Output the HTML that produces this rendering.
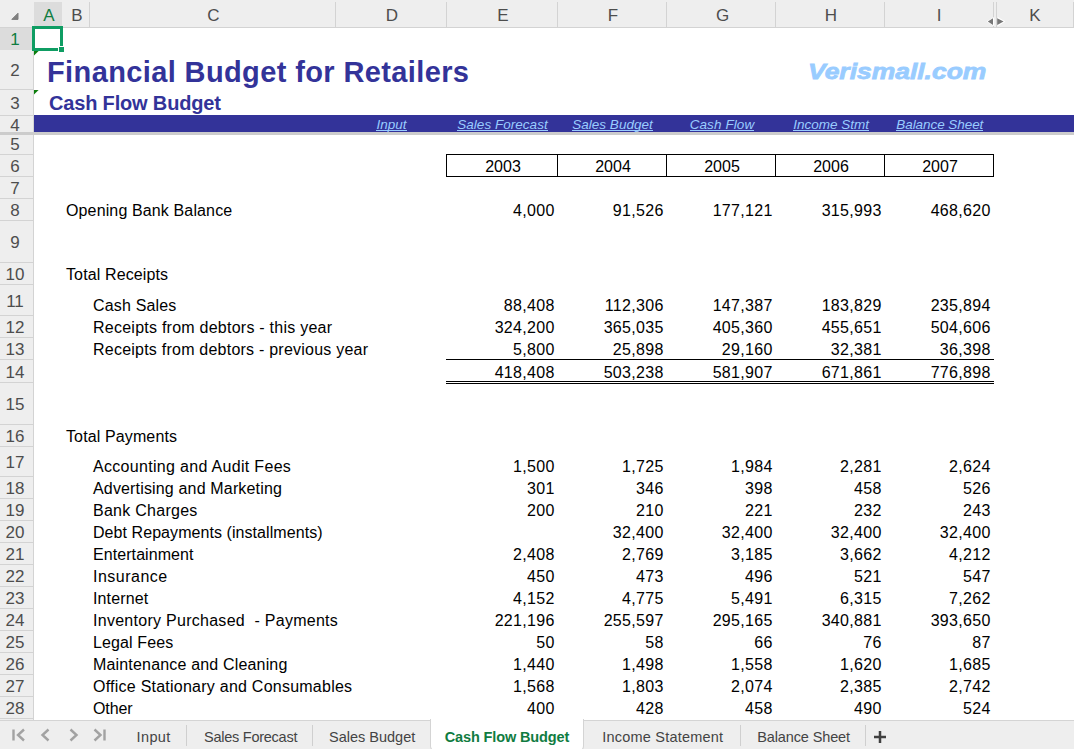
<!DOCTYPE html>
<html lang="en"><head><meta charset="utf-8"><title>Financial Budget for Retailers - Cash Flow Budget</title>
<style>
html,body{margin:0;padding:0;}
body{width:1074px;height:749px;overflow:hidden;background:#fff;position:relative;font-family:"Liberation Sans", sans-serif;color:#000;}
div,span{box-sizing:border-box;}
.a{position:absolute;white-space:pre;}
.ch{position:absolute;top:2px;height:27px;line-height:27px;text-align:center;font-size:17px;color:#4d4d4d;}
.rh{position:absolute;left:0;width:30px;text-align:center;font-size:17px;color:#4d4d4d;}
.vl{position:absolute;top:2px;height:25px;width:1px;background:#d3d3d3;}
.hl{position:absolute;left:0;width:33px;height:1px;background:#d3d3d3;}
.t{position:absolute;white-space:pre;font-size:16px;height:22px;line-height:22px;letter-spacing:0.2px;}
.n{position:absolute;white-space:pre;font-size:16px;height:22px;line-height:22px;text-align:right;letter-spacing:0.3px;}
.y{position:absolute;white-space:pre;font-size:16px;height:22px;line-height:22px;text-align:center;}
.lk{position:absolute;white-space:pre;font-size:13.5px;font-style:italic;color:#99ccff;text-align:center;height:17px;line-height:15px;top:117px;letter-spacing:0.03px;}
.lk span{display:inline-block;height:14px;line-height:15px;border-bottom:1px solid #99ccff;}
.bl{position:absolute;background:#000;}
.tab{position:absolute;top:723px;height:28px;line-height:28px;font-size:14.5px;color:#444;white-space:pre;}
.ts{position:absolute;top:725px;height:21px;width:1px;background:#cfcfcf;}

</style></head><body>
<div class="a" style="left:0;top:0;width:1074px;height:27px;background:#eeeeee"></div>
<div class="a" style="left:0;top:27px;width:1074px;height:1px;background:#d3d3d3"></div>
<div class="a" style="left:0;top:28px;width:33px;height:692px;background:#eeeeee"></div>
<div class="a" style="left:33px;top:28px;width:1px;height:692px;background:#d3d3d3"></div>
<div class="a" style="left:34px;top:2px;width:28px;height:25px;background:#dcdcdc"></div>
<div class="a" style="left:0;top:28px;width:33px;height:22px;background:#dcdcdc"></div>
<div class="vl" style="left:89px"></div>
<div class="vl" style="left:335px"></div>
<div class="vl" style="left:446px"></div>
<div class="vl" style="left:557px"></div>
<div class="vl" style="left:666px"></div>
<div class="vl" style="left:775px"></div>
<div class="vl" style="left:884px"></div>
<div class="vl" style="left:993px"></div>
<div class="vl" style="left:996px"></div>
<div class="vl" style="left:1073px"></div>
<div class="ch" style="left:35px;width:28px;color:#107c41;">A</div>
<div class="ch" style="left:64px;width:26px;">B</div>
<div class="ch" style="left:91px;width:245px;">C</div>
<div class="ch" style="left:337px;width:110px;">D</div>
<div class="ch" style="left:448px;width:110px;">E</div>
<div class="ch" style="left:559px;width:108px;">F</div>
<div class="ch" style="left:668.5px;width:108px;">G</div>
<div class="ch" style="left:777px;width:108px;">H</div>
<div class="ch" style="left:885px;width:108px;">I</div>
<div class="ch" style="left:997px;width:76px;">K</div>
<svg class="a" style="left:10px;top:10.6px" width="10" height="10" viewBox="0 0 10 10"><path d="M8 2.2 L8 8.4 L1.8 8.4 Z" fill="#7f7f7f" stroke="#7f7f7f" stroke-width="1" stroke-linejoin="round"/></svg>
<svg class="a" style="left:986px;top:16px" width="20" height="11" viewBox="0 0 20 11"><path d="M0.6 5.6 L8.2 1 L8.2 10.2 Z M19.4 5.6 L11.8 1 L11.8 10.2 Z" fill="#fff"/><path d="M1.8 5.6 L7 2.2 L7 9 Z M17.6 5.6 L11.2 2.2 L11.2 9 Z" fill="#777"/></svg>
<div class="rh" style="top:29px;height:21px;line-height:21px;color:#107c41;">1</div>
<div class="hl" style="top:89px"></div>
<div class="rh" style="top:51px;height:39px;line-height:39px;">2</div>
<div class="hl" style="top:115px"></div>
<div class="rh" style="top:91px;height:25px;line-height:25px;">3</div>
<div class="rh" style="top:118px;height:16px;line-height:16px;">4</div>
<div class="hl" style="top:154px"></div>
<div class="rh" style="top:134px;height:21px;line-height:21px;">5</div>
<div class="hl" style="top:176px"></div>
<div class="rh" style="top:156px;height:21px;line-height:21px;">6</div>
<div class="hl" style="top:198px"></div>
<div class="rh" style="top:178px;height:21px;line-height:21px;">7</div>
<div class="hl" style="top:220px"></div>
<div class="rh" style="top:200px;height:21px;line-height:21px;">8</div>
<div class="hl" style="top:262px"></div>
<div class="rh" style="top:222px;height:41px;line-height:41px;">9</div>
<div class="hl" style="top:284px"></div>
<div class="rh" style="top:264px;height:21px;line-height:21px;">10</div>
<div class="hl" style="top:315px"></div>
<div class="rh" style="top:287px;height:30px;line-height:30px;">11</div>
<div class="hl" style="top:337px"></div>
<div class="rh" style="top:317px;height:21px;line-height:21px;">12</div>
<div class="hl" style="top:359px"></div>
<div class="rh" style="top:339px;height:21px;line-height:21px;">13</div>
<div class="hl" style="top:382px"></div>
<div class="rh" style="top:362px;height:22px;line-height:22px;">14</div>
<div class="hl" style="top:424px"></div>
<div class="rh" style="top:384px;height:41px;line-height:41px;">15</div>
<div class="hl" style="top:446px"></div>
<div class="rh" style="top:426px;height:21px;line-height:21px;">16</div>
<div class="hl" style="top:476px"></div>
<div class="rh" style="top:448px;height:29px;line-height:29px;">17</div>
<div class="hl" style="top:498px"></div>
<div class="rh" style="top:478px;height:21px;line-height:21px;">18</div>
<div class="hl" style="top:520px"></div>
<div class="rh" style="top:500px;height:21px;line-height:21px;">19</div>
<div class="hl" style="top:542px"></div>
<div class="rh" style="top:522px;height:21px;line-height:21px;">20</div>
<div class="hl" style="top:564px"></div>
<div class="rh" style="top:544px;height:21px;line-height:21px;">21</div>
<div class="hl" style="top:586px"></div>
<div class="rh" style="top:566px;height:21px;line-height:21px;">22</div>
<div class="hl" style="top:608px"></div>
<div class="rh" style="top:588px;height:21px;line-height:21px;">23</div>
<div class="hl" style="top:630px"></div>
<div class="rh" style="top:610px;height:21px;line-height:21px;">24</div>
<div class="hl" style="top:652px"></div>
<div class="rh" style="top:632px;height:21px;line-height:21px;">25</div>
<div class="hl" style="top:674px"></div>
<div class="rh" style="top:654px;height:21px;line-height:21px;">26</div>
<div class="hl" style="top:696px"></div>
<div class="rh" style="top:676px;height:21px;line-height:21px;">27</div>
<div class="hl" style="top:718px"></div>
<div class="rh" style="top:698px;height:21px;line-height:21px;">28</div>
<div class="a" style="left:0;top:132px;width:1074px;height:3px;background:#cccccc"></div>
<div class="a" style="left:34px;top:115px;width:1040px;height:17px;background:#333399"></div>
<div class="lk" style="letter-spacing:0.03px;left:336px;width:111px"><span>Input</span></div>
<div class="lk" style="letter-spacing:0.03px;left:447px;width:111px"><span>Sales Forecast</span></div>
<div class="lk" style="letter-spacing:0.03px;left:558px;width:109px"><span>Sales Budget</span></div>
<div class="lk" style="letter-spacing:0.1px;left:667.5px;width:109px"><span>Cash Flow</span></div>
<div class="lk" style="letter-spacing:0px;left:776.6px;width:109px"><span>Income Stmt</span></div>
<div class="lk" style="letter-spacing:-0.06px;left:885.3px;width:109px"><span>Balance Sheet</span></div>
<div class="a" id="title" style="left:47px;top:55px;height:34px;line-height:34px;font-size:29px;font-weight:bold;color:#333399;letter-spacing:0.38px">Financial Budget for Retailers</div>
<div class="a" id="sub" style="left:49px;top:91px;height:24px;line-height:24px;font-size:20px;font-weight:bold;color:#333399;letter-spacing:-0.17px">Cash Flow Budget</div>
<div class="a" id="wa" style="left:808px;top:57px;height:30px;line-height:30px;font-size:22.6px;font-weight:bold;font-style:italic;color:#99ccff;-webkit-text-stroke:0.8px #99ccff;transform-origin:0 50%;transform:scaleX(1.17)">Verismall.com</div>
<div class="a" style="left:32px;top:26px;width:31px;height:25px;border:3px solid #0f9d63;background:#fff"></div>
<div class="a" style="left:58px;top:46px;width:7px;height:7px;background:#fff"></div>
<div class="a" style="left:59px;top:47px;width:5px;height:5px;background:#0f9d63"></div>
<svg class="a" style="left:34px;top:51px" width="5" height="5" viewBox="0 0 5 5"><path d="M0 0 L4.6 0 L0 4.6 Z" fill="#0b7d0b"/></svg>
<svg class="a" style="left:34px;top:90px" width="5" height="5" viewBox="0 0 5 5"><path d="M0 0 L4.6 0 L0 4.6 Z" fill="#0b7d0b"/></svg>
<div class="bl" style="left:446px;top:154px;width:548px;height:1px"></div>
<div class="bl" style="left:446px;top:176px;width:548px;height:1px"></div>
<div class="bl" style="left:446px;top:154px;width:1px;height:23px"></div>
<div class="bl" style="left:557px;top:154px;width:1px;height:23px"></div>
<div class="bl" style="left:666px;top:154px;width:1px;height:23px"></div>
<div class="bl" style="left:775px;top:154px;width:1px;height:23px"></div>
<div class="bl" style="left:884px;top:154px;width:1px;height:23px"></div>
<div class="bl" style="left:993px;top:154px;width:1px;height:23px"></div>
<div class="y" style="left:448px;width:110px;top:156px">2003</div>
<div class="y" style="left:559px;width:108px;top:156px">2004</div>
<div class="y" style="left:668px;width:108px;top:156px">2005</div>
<div class="y" style="left:777px;width:108px;top:156px">2006</div>
<div class="y" style="left:886px;width:108px;top:156px">2007</div>
<div class="t" style="left:66px;top:200px;letter-spacing:0.132px">Opening Bank Balance</div>
<div class="n" style="left:447px;width:107.6px;top:200px">4,000</div>
<div class="n" style="left:558px;width:105.6px;top:200px">91,526</div>
<div class="n" style="left:667px;width:105.6px;top:200px">177,121</div>
<div class="n" style="left:776px;width:105.6px;top:200px">315,993</div>
<div class="n" style="left:885px;width:105.6px;top:200px">468,620</div>
<div class="t" style="left:66px;top:264px;letter-spacing:0.123px">Total Receipts</div>
<div class="t" style="left:93px;top:295px;letter-spacing:0.167px">Cash Sales</div>
<div class="n" style="left:447px;width:107.6px;top:295px">88,408</div>
<div class="n" style="left:558px;width:105.6px;top:295px">112,306</div>
<div class="n" style="left:667px;width:105.6px;top:295px">147,387</div>
<div class="n" style="left:776px;width:105.6px;top:295px">183,829</div>
<div class="n" style="left:885px;width:105.6px;top:295px">235,894</div>
<div class="t" style="left:93px;top:317px;letter-spacing:0.244px">Receipts from debtors - this year</div>
<div class="n" style="left:447px;width:107.6px;top:317px">324,200</div>
<div class="n" style="left:558px;width:105.6px;top:317px">365,035</div>
<div class="n" style="left:667px;width:105.6px;top:317px">405,360</div>
<div class="n" style="left:776px;width:105.6px;top:317px">455,651</div>
<div class="n" style="left:885px;width:105.6px;top:317px">504,606</div>
<div class="t" style="left:93px;top:339px;letter-spacing:0.23px">Receipts from debtors - previous year</div>
<div class="n" style="left:447px;width:107.6px;top:339px">5,800</div>
<div class="n" style="left:558px;width:105.6px;top:339px">25,898</div>
<div class="n" style="left:667px;width:105.6px;top:339px">29,160</div>
<div class="n" style="left:776px;width:105.6px;top:339px">32,381</div>
<div class="n" style="left:885px;width:105.6px;top:339px">36,398</div>
<div class="n" style="left:447px;width:107.6px;top:362px">418,408</div>
<div class="n" style="left:558px;width:105.6px;top:362px">503,238</div>
<div class="n" style="left:667px;width:105.6px;top:362px">581,907</div>
<div class="n" style="left:776px;width:105.6px;top:362px">671,861</div>
<div class="n" style="left:885px;width:105.6px;top:362px">776,898</div>
<div class="t" style="left:66px;top:426px;letter-spacing:0.123px">Total Payments</div>
<div class="t" style="left:93px;top:456px;letter-spacing:0.312px">Accounting and Audit Fees</div>
<div class="n" style="left:447px;width:107.6px;top:456px">1,500</div>
<div class="n" style="left:558px;width:105.6px;top:456px">1,725</div>
<div class="n" style="left:667px;width:105.6px;top:456px">1,984</div>
<div class="n" style="left:776px;width:105.6px;top:456px">2,281</div>
<div class="n" style="left:885px;width:105.6px;top:456px">2,624</div>
<div class="t" style="left:93px;top:478px;letter-spacing:0.162px">Advertising and Marketing</div>
<div class="n" style="left:447px;width:107.6px;top:478px">301</div>
<div class="n" style="left:558px;width:105.6px;top:478px">346</div>
<div class="n" style="left:667px;width:105.6px;top:478px">398</div>
<div class="n" style="left:776px;width:105.6px;top:478px">458</div>
<div class="n" style="left:885px;width:105.6px;top:478px">526</div>
<div class="t" style="left:93px;top:500px;letter-spacing:0.264px">Bank Charges</div>
<div class="n" style="left:447px;width:107.6px;top:500px">200</div>
<div class="n" style="left:558px;width:105.6px;top:500px">210</div>
<div class="n" style="left:667px;width:105.6px;top:500px">221</div>
<div class="n" style="left:776px;width:105.6px;top:500px">232</div>
<div class="n" style="left:885px;width:105.6px;top:500px">243</div>
<div class="t" style="left:93px;top:522px;letter-spacing:0.066px">Debt Repayments (installments)</div>
<div class="n" style="left:558px;width:105.6px;top:522px">32,400</div>
<div class="n" style="left:667px;width:105.6px;top:522px">32,400</div>
<div class="n" style="left:776px;width:105.6px;top:522px">32,400</div>
<div class="n" style="left:885px;width:105.6px;top:522px">32,400</div>
<div class="t" style="left:93px;top:544px;letter-spacing:0.075px">Entertainment</div>
<div class="n" style="left:447px;width:107.6px;top:544px">2,408</div>
<div class="n" style="left:558px;width:105.6px;top:544px">2,769</div>
<div class="n" style="left:667px;width:105.6px;top:544px">3,185</div>
<div class="n" style="left:776px;width:105.6px;top:544px">3,662</div>
<div class="n" style="left:885px;width:105.6px;top:544px">4,212</div>
<div class="t" style="left:93px;top:566px;letter-spacing:0.486px">Insurance</div>
<div class="n" style="left:447px;width:107.6px;top:566px">450</div>
<div class="n" style="left:558px;width:105.6px;top:566px">473</div>
<div class="n" style="left:667px;width:105.6px;top:566px">496</div>
<div class="n" style="left:776px;width:105.6px;top:566px">521</div>
<div class="n" style="left:885px;width:105.6px;top:566px">547</div>
<div class="t" style="left:93px;top:588px;letter-spacing:0.129px">Internet</div>
<div class="n" style="left:447px;width:107.6px;top:588px">4,152</div>
<div class="n" style="left:558px;width:105.6px;top:588px">4,775</div>
<div class="n" style="left:667px;width:105.6px;top:588px">5,491</div>
<div class="n" style="left:776px;width:105.6px;top:588px">6,315</div>
<div class="n" style="left:885px;width:105.6px;top:588px">7,262</div>
<div class="t" style="left:93px;top:610px;letter-spacing:0.276px">Inventory Purchased  - Payments</div>
<div class="n" style="left:447px;width:107.6px;top:610px">221,196</div>
<div class="n" style="left:558px;width:105.6px;top:610px">255,597</div>
<div class="n" style="left:667px;width:105.6px;top:610px">295,165</div>
<div class="n" style="left:776px;width:105.6px;top:610px">340,881</div>
<div class="n" style="left:885px;width:105.6px;top:610px">393,650</div>
<div class="t" style="left:93px;top:632px;letter-spacing:0.122px">Legal Fees</div>
<div class="n" style="left:447px;width:107.6px;top:632px">50</div>
<div class="n" style="left:558px;width:105.6px;top:632px">58</div>
<div class="n" style="left:667px;width:105.6px;top:632px">66</div>
<div class="n" style="left:776px;width:105.6px;top:632px">76</div>
<div class="n" style="left:885px;width:105.6px;top:632px">87</div>
<div class="t" style="left:93px;top:654px;letter-spacing:0.173px">Maintenance and Cleaning</div>
<div class="n" style="left:447px;width:107.6px;top:654px">1,440</div>
<div class="n" style="left:558px;width:105.6px;top:654px">1,498</div>
<div class="n" style="left:667px;width:105.6px;top:654px">1,558</div>
<div class="n" style="left:776px;width:105.6px;top:654px">1,620</div>
<div class="n" style="left:885px;width:105.6px;top:654px">1,685</div>
<div class="t" style="left:93px;top:676px;letter-spacing:0.24px">Office Stationary and Consumables</div>
<div class="n" style="left:447px;width:107.6px;top:676px">1,568</div>
<div class="n" style="left:558px;width:105.6px;top:676px">1,803</div>
<div class="n" style="left:667px;width:105.6px;top:676px">2,074</div>
<div class="n" style="left:776px;width:105.6px;top:676px">2,385</div>
<div class="n" style="left:885px;width:105.6px;top:676px">2,742</div>
<div class="t" style="left:93px;top:698px;letter-spacing:-0.1px">Other</div>
<div class="n" style="left:447px;width:107.6px;top:698px">400</div>
<div class="n" style="left:558px;width:105.6px;top:698px">428</div>
<div class="n" style="left:667px;width:105.6px;top:698px">458</div>
<div class="n" style="left:776px;width:105.6px;top:698px">490</div>
<div class="n" style="left:885px;width:105.6px;top:698px">524</div>
<div class="bl" style="left:446px;top:359px;width:548px;height:1px"></div>
<div class="bl" style="left:446px;top:381px;width:548px;height:1px"></div>
<div class="bl" style="left:446px;top:383px;width:548px;height:1px"></div>
<div class="a" style="left:0;top:720px;width:1074px;height:29px;background:#eeeeee"></div>
<div class="a" style="left:0;top:720px;width:1074px;height:1px;background:#d4d4d4"></div>
<div class="a" style="left:430px;top:719px;width:154px;height:33px;background:#fff;border:1px solid #d4d4d4;border-top:none;border-radius:0 0 6px 6px"></div>
<div class="ts" style="left:186px"></div>
<div class="ts" style="left:312px"></div>
<div class="ts" style="left:740px"></div>
<div class="ts" style="left:865px"></div>
<svg class="a" style="left:10px;top:727px" width="100" height="16" viewBox="0 0 100 16" fill="none" stroke="#a2a2a2" stroke-width="2.4"><path d="M3.5 2.5 V13.5 M14 2.5 L8 8 L14 13.5"/><path d="M38.5 2.5 L32.5 8 L38.5 13.5"/><path d="M60.5 2.5 L66.5 8 L60.5 13.5"/><path d="M84.5 2.5 L90.5 8 L84.5 13.5 M94.5 2.5 V13.5"/></svg>
<div class="tab" style="left:136.5px;letter-spacing:0.4px;">Input</div>
<div class="tab" style="left:204px;letter-spacing:-0.25px;">Sales Forecast</div>
<div class="tab" style="left:329px;letter-spacing:0px;">Sales Budget</div>
<div class="tab" style="left:444.7px;letter-spacing:-0.12px;font-weight:bold;color:#107c41;">Cash Flow Budget</div>
<div class="tab" style="left:602.3px;letter-spacing:0.21px;">Income Statement</div>
<div class="tab" style="left:757.3px;letter-spacing:-0.13px;">Balance Sheet</div>
<svg class="a" style="left:873px;top:730px" width="14" height="14" viewBox="0 0 14 14"><path d="M7 1 V13 M1 7 H13" stroke="#404040" stroke-width="2.5" fill="none"/></svg>
</body></html>
